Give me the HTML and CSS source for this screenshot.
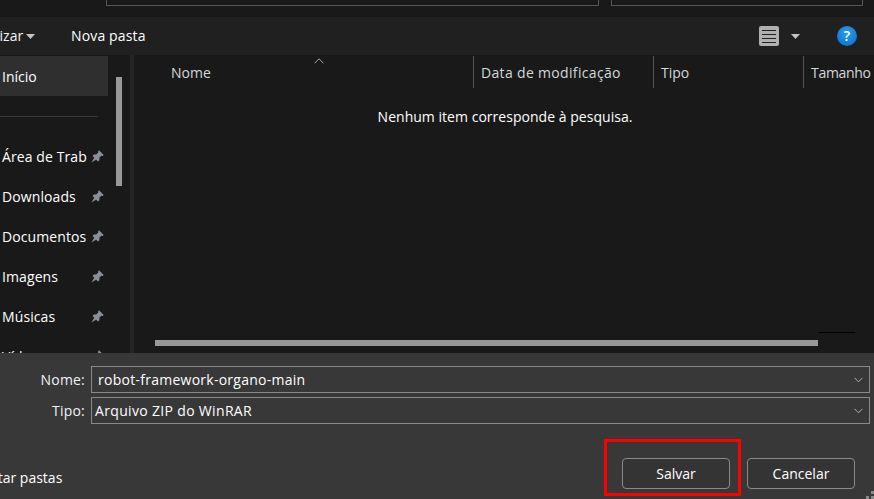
FILE: index.html
```html
<!DOCTYPE html>
<html lang="pt-BR">
<head>
  <meta charset="UTF-8"/>
  <title>Salvar como</title>
  <link rel="stylesheet" href="styles.css">
</head>
<body>
  <svg class="defs" width="0" height="0">
    <symbol id="pin" viewBox="0 0 13 13">
      <path d="M8 0.3 12.7 5 11.6 6 10.4 5.8 8.4 7.8 8.4 10.2 7 11.4 1.6 6 2.8 4.6 5.2 4.6 7.2 2.6 7 1.4Z" fill="#8b9096"/>
      <path d="M3.4 7.6 0.4 12.6 5.4 9.6Z" fill="#8b9096"/>
    </symbol>
    <symbol id="caret" viewBox="0 0 9 5">
      <path d="M0 0H9L4.5 5Z" fill="#c4c4c4"/>
    </symbol>
    <symbol id="chev" viewBox="0 0 9 6">
      <path d="M0.5 0.8 4.5 4.8 8.5 0.8" fill="none" stroke="#b5b5b5"/>
    </symbol>
  </svg>

  <div class="top-strip">
    <div class="path-box path-address"></div>
    <div class="path-box path-search"></div>
  </div>

  <div class="toolbar">
    <span class="tool-org">Organizar</span>
    <svg class="caret caret-org"><use href="#caret"/></svg>
    <span class="tool-new">Nova pasta</span>
    <div class="view-icon"><i></i><i></i><i></i><i></i></div>
    <svg class="caret caret-view"><use href="#caret"/></svg>
    <div class="help-icon">?</div>
  </div>

  <div class="main">
    <nav class="sidebar">
      <div class="nav-active">Início</div>
      <div class="nav-sep"></div>
      <div class="nav-item"><span>Área de Trab</span><svg class="pin"><use href="#pin"/></svg></div>
      <div class="nav-item"><span>Downloads</span><svg class="pin"><use href="#pin"/></svg></div>
      <div class="nav-item"><span>Documentos</span><svg class="pin"><use href="#pin"/></svg></div>
      <div class="nav-item"><span>Imagens</span><svg class="pin"><use href="#pin"/></svg></div>
      <div class="nav-item"><span>Músicas</span><svg class="pin"><use href="#pin"/></svg></div>
      <div class="nav-item"><span>Vídeos</span><svg class="pin"><use href="#pin"/></svg></div>
      <div class="side-thumb"></div>
    </nav>
    <div class="list">
      <div class="list-head">
        <div class="col col-name">Nome
          <svg class="sort" viewBox="0 0 10 6"><path d="M0.5 5.3 5 0.8 9.5 5.3" fill="none" stroke="#a8a8a8"/></svg>
        </div>
        <div class="col col-date">Data de modificação</div>
        <div class="col col-type">Tipo</div>
        <div class="col col-size">Tamanho</div>
      </div>
      <p class="empty">Nenhum item corresponde à pesquisa.</p>
      <div class="corner-line"></div>
      <div class="h-thumb"></div>
    </div>
  </div>

  <div class="bottom">
    <div class="field-row">
      <label class="field-label">Nome:</label>
      <div class="field field-name">robot-framework-organo-main<svg class="chev"><use href="#chev"/></svg></div>
    </div>
    <div class="field-row">
      <label class="field-label">Tipo:</label>
      <div class="field field-type">Arquivo ZIP do WinRAR<svg class="chev"><use href="#chev"/></svg></div>
    </div>
    <div class="actions">
      <span class="hide-folders">Ocultar pastas</span>
      <div class="highlight"><button class="btn">Salvar</button></div>
      <button class="btn btn-cancel">Cancelar</button>
    </div>
    <svg class="grip" viewBox="0 0 8 8">
      <path d="M5 0h3v3H5zM0 5h3v3H0zM5 5h3v3H5z" fill="#8a8a8a"/>
    </svg>
  </div>
</body>
</html>
```

FILE: styles.css
```css
* {
  margin: 0;
  padding: 0;
  box-sizing: border-box;
}

html, body {
  height: 499px;
  overflow: hidden;
}

body {
  font-family: "Open Sans", "Noto Sans", sans-serif;
  font-size: 14px;
  color: #fff;
  background: #191919;
  position: relative;
}

.defs {
  position: absolute;
}

/* Address and search boxes, cut off by the top of the picture */
.top-strip {
  height: 17px;
  background: #191919;
  display: flex;
  padding-left: 106px;
  gap: 12px;
}

.path-box {
  height: 6px;
  border: 1px solid #555;
  border-top: none;
}

.path-address {
  width: 493px;
}

.path-search {
  width: 252px;
}

/* Toolbar */
.toolbar {
  height: 38px;
  background: #202020;
  display: flex;
  align-items: center;
  padding-right: 17px;
}

.tool-org {
  margin-left: -41px;
  width: 62px;
  color: #f4f4f4;
  line-height: 40px;
  white-space: nowrap;
}

.caret {
  width: 9px;
  height: 5px;
}

.caret-org {
  margin-left: 5px;
}

.tool-new {
  margin-left: 36px;
  letter-spacing: 0.15px;
  line-height: 40px;
}

.view-icon {
  width: 20px;
  height: 20px;
  margin-left: auto;
  background: #b0b0b0;
  border-radius: 2px;
  display: flex;
  flex-direction: column;
  justify-content: center;
  gap: 3px;
  padding: 0 3px;
}

.view-icon i {
  display: block;
  height: 1px;
  background: #222;
}

.caret-view {
  margin-left: 12px;
}

.help-icon {
  width: 20px;
  height: 20px;
  margin-left: 37px;
  border-radius: 50%;
  background: radial-gradient(circle at 50% 35%, #2a9df0, #0a6cc4);
  text-align: center;
  font-size: 14px;
  font-weight: 600;
  line-height: 20px;
}

/* Main area */
.main {
  height: 298px;
  display: flex;
  overflow: hidden;
}

.sidebar {
  width: 134px;
  flex-shrink: 0;
  position: relative;
  border-right: 4px solid #242424;
}

.nav-active {
  height: 40px;
  margin-top: 1px;
  width: 108px;
  background: #2f2f2f;
  padding-left: 2px;
  line-height: 41px;
}

.nav-sep {
  height: 1px;
  width: 98px;
  margin-top: 20px;
  background: #3a3a3a;
}

.nav-item {
  height: 40px;
  width: 108px;
  padding-left: 2px;
  display: flex;
  align-items: center;
  justify-content: space-between;
  white-space: nowrap;
  letter-spacing: 0.1px;
}

.nav-sep + .nav-item {
  margin-top: 19px;
}

.pin {
  width: 13px;
  height: 13px;
  margin-right: 4px;
  flex-shrink: 0;
}

.side-thumb {
  position: absolute;
  left: 116px;
  top: 22px;
  width: 6px;
  height: 109px;
  background: #999;
}

/* File list */
.list {
  flex: 1;
  position: relative;
  background: #191919;
}

.list-head {
  display: flex;
  height: 33px;
  padding-top: 1px;
  color: #d4d8dc;
}

.col {
  line-height: 34px;
  white-space: nowrap;
  overflow: hidden;
  padding-left: 7px;
  border-left: 1px solid #555;
}

.col-name {
  width: 339px;
  padding-left: 37px;
  border-left: none;
  position: relative;
}

.col-date {
  width: 180px;
  letter-spacing: 0.33px;
}

.col-type {
  width: 150px;
}

.col-size {
  flex: 1;
  letter-spacing: -0.3px;
}

.sort {
  position: absolute;
  left: 180px;
  top: 2px;
  width: 10px;
  height: 6px;
}

.empty {
  text-align: center;
  margin-top: 19px;
  margin-left: 2px;
  line-height: 20px;
  letter-spacing: 0.03px;
}

.corner-line {
  position: absolute;
  left: 684px;
  top: 277px;
  width: 37px;
  height: 1px;
  background: #000;
}

.h-thumb {
  position: absolute;
  left: 21px;
  top: 285px;
  width: 663px;
  height: 6px;
  background: #999;
}

/* Name and type fields, buttons */
.bottom {
  height: 146px;
  background: #383838;
  padding-top: 13px;
  position: relative;
}

.field-row {
  display: flex;
  margin-bottom: 4px;
}

.field-label {
  width: 85px;
  margin-right: 6px;
  text-align: right;
  line-height: 27px;
  color: #eef2f6;
  letter-spacing: 0.2px;
}

.field {
  width: 779px;
  height: 27px;
  border: 1px solid #8a8a8a;
  line-height: 25px;
  display: flex;
  align-items: center;
  justify-content: space-between;
  padding-right: 6px;
}

.field-name {
  padding-left: 6px;
  letter-spacing: 0.26px;
}

.field-type {
  padding-left: 3px;
  letter-spacing: 0.33px;
}

.chev {
  width: 9px;
  height: 6px;
}

.actions {
  display: flex;
  align-items: flex-start;
  margin-top: 15px;
}

.hide-folders {
  margin-left: -32px;
  width: 94px;
  margin-top: 29px;
  line-height: 20px;
  white-space: nowrap;
}

.highlight {
  margin-left: 542px;
  width: 137px;
  height: 57px;
  border: 3px solid #f00;
  padding: 16px 0 0 15px;
}

.btn {
  display: block;
  width: 108px;
  height: 31px;
  background: #343434;
  border: 1px solid #8a8a8a;
  border-radius: 4px;
  color: #fff;
  font-family: inherit;
  font-size: 14px;
}

.btn-cancel {
  margin-left: 6px;
  margin-top: 19px;
}

.grip {
  position: absolute;
  right: 0;
  bottom: 0;
  width: 8px;
  height: 8px;
}
```
